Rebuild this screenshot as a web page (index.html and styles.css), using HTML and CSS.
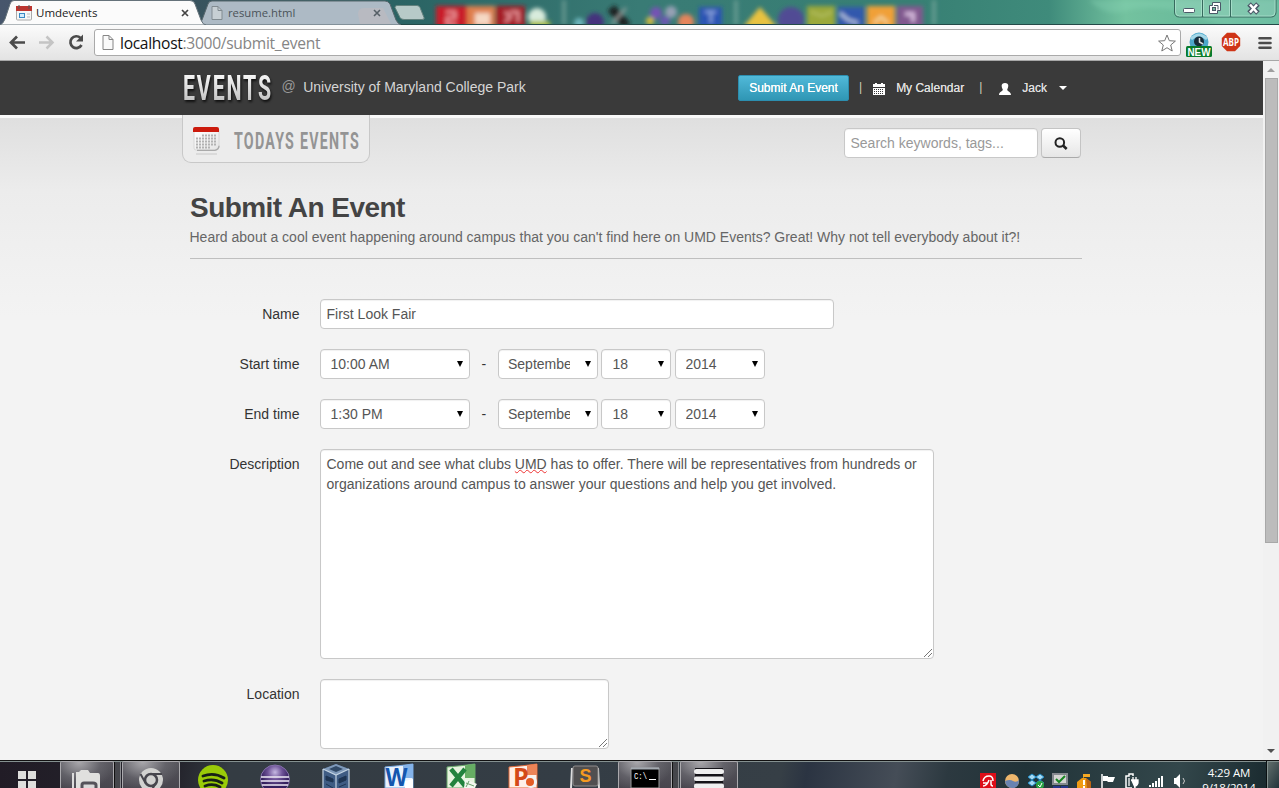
FILE: index.html
```html
<!DOCTYPE html>
<html lang="en">
<head>
<meta charset="utf-8">
<title>Umdevents</title>
<link rel="stylesheet" href="styles.css">
</head>
<body>
<div class="screen">
  <div class="tabstrip">
    <svg class="wallpaper" width="1279" height="25" viewBox="0 0 1279 25">
      <defs>
        <linearGradient id="sky"><stop offset="0" stop-color="#47566c"/><stop offset=".15" stop-color="#39535e"/><stop offset=".32" stop-color="#2b6464"/><stop offset=".5" stop-color="#397b75"/><stop offset=".72" stop-color="#388074"/><stop offset=".82" stop-color="#3f8b7b"/><stop offset=".88" stop-color="#73c29f"/><stop offset="1" stop-color="#5eb197"/></linearGradient>
        <filter id="soft" filterUnits="userSpaceOnUse" x="0" y="-10" width="1279" height="50"><feGaussianBlur stdDeviation="2.3"/></filter>
      </defs>
      <rect width="1279" height="25" fill="url(#sky)"/>
      <g filter="url(#soft)">
        <rect x="436" y="6" width="31" height="24" fill="#c91c2a"/><rect x="467" y="6" width="28" height="24" fill="#df804e"/><rect x="496" y="6" width="29" height="24" fill="#a51d27"/>
        <path d="M446 12h9v6h-8v6h9M505 12l6 5-6 5M510 12h8v10" stroke="#ed9ba0" stroke-width="2.500" fill="none"/>
        <rect x="475" y="13" width="15" height="12" fill="#f5d8c4"/>
        <circle cx="537" cy="17" r="9" fill="#d8ebdc"/><path d="M530 21h20v8h-20z" fill="#a8bd45"/>
        <circle cx="595" cy="22" r="9" fill="#45307d"/><circle cx="579" cy="23" r="5" fill="#6db6bd"/><path d="M611 8l16 18" stroke="#1c2224" stroke-width="9"/><path d="M612 24l14-16" stroke="#a3a7a5" stroke-width="2"/>
        <circle cx="656" cy="13" r="6" fill="#7553b4"/><circle cx="671" cy="12" r="6" fill="#96a0b4"/><circle cx="650" cy="21" r="4" fill="#d2bb3c"/><circle cx="665" cy="21" r="5" fill="#6b56b1"/><circle cx="686" cy="22" r="8" fill="#e5855c"/>
        <rect x="699" y="7" width="23" height="22" fill="#2954b4"/><path d="M705 12h11M711 12v11" stroke="#8ea7df" stroke-width="2.500"/>
        <path d="M743 27l17-20 17 20z" fill="#e8c240"/><circle cx="791" cy="20" r="13" fill="#514b94"/><rect x="807" y="6" width="28" height="23" fill="#9ba93b"/><path d="M811 12l11 4 10-4" stroke="#d1d98b" fill="none"/><rect x="838" y="7" width="26" height="22" fill="#3258ad"/><path d="M840 13l8 7 10 3" stroke="#b9c7df" stroke-width="3" fill="none"/><rect x="867" y="6" width="28" height="23" fill="#f0a038"/><path d="M874 23l7-6 7 6" stroke="#f2d39a" stroke-width="3" fill="none"/><rect x="897" y="6" width="26" height="23" fill="#81598f"/><path d="M905 14h8v8" stroke="#d4b8db" stroke-width="4" fill="none"/>
        <path d="M564 0v25M736 0v25M934 0v25" stroke="#90b5ac" stroke-width="4" opacity=".5"/>
        <path d="M1089 0q15 17 36 11t55 0l50 18h50V0z" fill="#90dab9" opacity=".3"/>
      </g>
      <path d="M0 24.500h1279" stroke="#244a48"/>
    </svg>
    <svg class="tabshapes" width="430" height="25" viewBox="0 0 430 25">
      <path d="M197 25Q200 25 202 20L208 4Q209 1 212 1H385Q388 1 390 4L396 20Q398 24 401 25z" fill="#adbac5" stroke="#57666c"/>
      <path d="M358 14q0-6 6-6h19l8 16h-31z" fill="#cfb9bb" opacity=".35"/>
      <path d="M395 7.500q0-2 2-2h20q2 0 3 2l4 10q1 2-2 2h-18q-3 0-4-2z" fill="#b7cac8" stroke="#62817d"/>
      <path d="M0 25Q3 24 5 19L10 4Q11 .5 14 .5H190Q194 .5 195 4L201 20Q203 25 206 25z" fill="#fbfbfb" stroke="#65727a"/>
    </svg>
    <div class="tab tab-active">
      <svg width="16" height="16" viewBox="0 0 16 16"><rect x=".5" y="2" width="15" height="13" rx="1" fill="#f6f6f6" stroke="#aaa"/><path d="M0 1h16v5H0z" fill="#bc3530"/><path d="M3 0v4M13 0v4" stroke="#555"/><rect x="3.500" y="8.500" width="5" height="4" fill="#d3eafa" stroke="#3989c4"/><path d="M11 9h3M11 12h3" stroke="#bbb"/></svg>
      <span class="tab-title">Umdevents</span>
      <svg class="tab-close" width="8" height="8" viewBox="0 0 8 8"><path d="M1 1l6 6M7 1L1 7" stroke="#444" stroke-width="1.700"/></svg>
    </div>
    <div class="tab tab-idle">
      <svg width="12" height="14" viewBox="0 0 12 14"><path d="M1 .5h6l4 4v9H1z" fill="#c7cfd4" stroke="#818b91"/><path d="M7 .5v4h4" fill="none" stroke="#818b91"/></svg>
      <span class="tab-title">resume.html</span>
      <svg class="tab-close" width="8" height="8" viewBox="0 0 8 8"><path d="M1 1l6 6M7 1L1 7" stroke="#555f66" stroke-width="1.600"/></svg>
    </div>
    <svg class="window-buttons" width="106" height="19" viewBox="0 0 106 19"><path d="M1.500 0v12q0 5 5 5H98q5 0 5-5V0M29.500 0v17M57.500 0v17" fill="#fff" fill-opacity=".12" stroke="#376a5e"/><path d="M2.500 0v12q0 4 4 4h22V0M30.500 0v16h26V0M58.500 0v16H98q4 0 4-4V0" fill="none" stroke="#b7e8d5" stroke-opacity=".65"/><rect x="10.500" y="8.500" width="11" height="4" rx="1" fill="#fff" stroke="#4b5968"/><path d="M39.500 2.500h8v8h-3v3h-8v-8h3z" fill="#fff" stroke="#4b5968"/><rect x="39.500" y="7.500" width="3" height="3" fill="#73b89e" stroke="#4b5968"/><path d="M41 5.500h4v4" fill="none" stroke="#4b5968"/><path d="M76 4l9 9M85 4l-9 9" stroke="#4b5968" stroke-width="5"/><path d="M77 4.500l7 8M84 4.500l-7 8" stroke="#fff" stroke-width="2.500"/></svg>
  </div>

  <div class="toolbar">
    <svg class="nav-icons" width="78" height="20" viewBox="0 0 78 20"><path d="M17 9.500H3M9 3.500l-6 6 6 6" fill="none" stroke="#4b4b4b" stroke-width="2.700"/><path d="M31 9.500h13M38.500 3.500l6 6-6 6" fill="none" stroke="#c4c4c4" stroke-width="2.500"/><path d="M72.500 5A5.900 5.900 0 1 0 73.500 12" fill="none" stroke="#4b4b4b" stroke-width="2.700"/><path d="M75 1.500v7h-7z" fill="#4b4b4b"/></svg>
    <div class="omnibox">
      <svg width="12" height="15" viewBox="0 0 12 15"><path d="M1 .5h6l4 4v10H1z" fill="#fafafa" stroke="#868686"/><path d="M7 .5v4h4" fill="none" stroke="#868686"/></svg>
      <span class="url"><span class="host">localhost</span>:3000/submit_event</span>
      <svg class="star" width="18" height="18" viewBox="0 0 18 18"><path d="M9 1l2.300 5.700 6.100.4-4.700 3.900 1.500 6L9 13.700 3.800 17l1.500-6L.6 7.100l6.100-.4z" fill="#fff" stroke="#777"/></svg>
    </div>
    <svg class="ext-new" width="28" height="26" viewBox="0 0 28 26"><circle cx="14" cy="10" r="9.500" fill="#4da8cc"/><path d="M6 7q8-8 16 0" fill="none" stroke="#a4d7e7" stroke-width="3"/><circle cx="14" cy="9.500" r="5" fill="#172c3a"/><path d="M14.500 6v4l3.500 2" stroke="#ddd" stroke-width="1.500" fill="none"/><rect x="1" y="14" width="26" height="11" rx="1.500" fill="#087b2b"/><text x="2.500" y="23.500" textLength="23" lengthAdjust="spacingAndGlyphs" class="badge-new">NEW</text></svg>
    <svg class="ext-abp" width="20" height="20" viewBox="0 0 20 20"><path d="M6 .8h8L19.200 6v8L14 19.200H6L.8 14V6z" fill="#cf3517"/><text x="2" y="13.500" textLength="16" lengthAdjust="spacingAndGlyphs" class="badge-abp">ABP</text></svg>
    <svg class="menu-icon" width="14" height="14" viewBox="0 0 14 14"><path d="M1.500 2.200h11M1.500 7h11M1.500 11.800h11" stroke="#4c4c4c" stroke-width="2.600" stroke-linecap="round"/></svg>
  </div>

  <div class="viewport">
    <div class="page">
      <div class="navbar">
        <svg class="brand" width="92" height="36" viewBox="0 0 92 36">
          <defs><linearGradient id="metal" x2="0" y2="1"><stop offset=".2" stop-color="#f5f5f5"/><stop offset=".8" stop-color="#c6c6c6"/></linearGradient></defs>
          <text x="1" y="28.500" textLength="90" lengthAdjust="spacingAndGlyphs" class="brand-text" fill="url(#metal)">EVENTS</text>
        </svg>
        <span class="at">@</span>
        <span class="school">University of Maryland College Park</span>
        <div class="usernav">
          <a class="btn-submit">Submit An Event</a>
          <span class="bar bar-one">|</span>
          <svg class="cal" width="12" height="12" viewBox="0 0 12 12" shape-rendering="crispEdges"><path d="M0 1h12v3H0zM2 0h2v1H2zM8 0h2v1H8zM0 5h12v7H0z" fill="#fff"/><path d="M1 6.500h10M1 8.500h10M1 10.500h10" stroke="#3a3a3a" stroke-dasharray="1 1"/></svg>
          <span class="my-cal">My Calendar</span>
          <span class="bar bar-two">|</span>
          <svg class="person" width="12" height="12" viewBox="0 0 12 12"><path d="M6 0c4.500 0 3.500 4 2.200 6.500 0 2 3.800 2 3.800 5.500H0C0 8.500 3.800 8.500 3.800 6.500 2.500 4 1.500 0 6 0z" fill="#fff"/></svg>
          <span class="user">Jack</span>
          <span class="caret"></span>
        </div>
      </div>
      <div class="subnav">
        <div class="today">
          <svg width="28" height="30" viewBox="0 0 28 30"><defs><linearGradient id="paper" x2="1" y2="1"><stop stop-color="#fff"/><stop offset="1" stop-color="#e4e4e4"/></linearGradient></defs><path d="M1 4h25v17q0 3-3 3H3q-2 0-2-2z" fill="url(#paper)" stroke="#d8d8d8"/><path d="M4 24.300h18q4-1 4-4.500" fill="none" stroke="#aaa" stroke-width="1.300"/><path d="M0 6V3q0-2 2-2h22q2 0 2 2v3z" fill="#cc1b0d"/><path d="M9 9.500h14M3 12.500h20M3 15.500h20M3 18.500h20M3 21.500h14" stroke="#b2b2b2" stroke-width="2" stroke-dasharray="2 1"/><path d="M3 28h21" stroke="#d5d5d5" stroke-width="1.500"/></svg>
          <svg class="today-label" width="128" height="26" viewBox="0 0 128 26"><text x="0" y="19.500" textLength="126" lengthAdjust="spacingAndGlyphs" class="today-text">TODAYS EVENTS</text></svg>
        </div>
        <div class="search">
          <div class="field search-field">Search keywords, tags...</div>
          <div class="search-btn"><svg width="14" height="14" viewBox="0 0 14 14"><circle cx="5.800" cy="5.500" r="4.300" fill="none" stroke="#222" stroke-width="2"/><path d="M9 8.500l3.700 3.500" stroke="#222" stroke-width="2.600"/></svg></div>
        </div>
      </div>
      <div class="heading">
        <h1>Submit An Event</h1>
        <p>Heard about a cool event happening around campus that you can't find here on UMD Events? Great! Why not tell everybody about it?!</p>
      </div>
      <form class="form">
        <div class="row"><label>Name</label><div class="field name">First Look Fair</div></div>
        <div class="row"><label>Start time</label><div class="field pick time"><span>10:00 AM</span><i></i></div><span class="dash">-</span><div class="field pick month"><span>September</span><i></i></div><div class="field pick day"><span>18</span><i></i></div><div class="field pick year"><span>2014</span><i></i></div></div>
        <div class="row"><label>End time</label><div class="field pick time"><span>1:30 PM</span><i></i></div><span class="dash">-</span><div class="field pick month"><span>September</span><i></i></div><div class="field pick day"><span>18</span><i></i></div><div class="field pick year"><span>2014</span><i></i></div></div>
        <div class="row"><label>Description</label><div class="field area description">Come out and see what clubs <u>UMD</u> has to offer. There will be representatives from hundreds or organizations around campus to answer your questions and help you get involved.<svg class="grip" width="8" height="8" viewBox="0 0 8 8"><path d="M0 8L8 0M4 8l4-4" stroke="#777"/></svg></div></div>
        <div class="row"><label>Location</label><div class="field area location"><svg class="grip" width="8" height="8" viewBox="0 0 8 8"><path d="M0 8L8 0M4 8l4-4" stroke="#777"/></svg></div></div>
      </form>
    </div>
    <div class="scrollbar"><span class="arrow-up"></span><div class="thumb"></div><span class="arrow-down"></span></div>
  </div>

  <div class="taskbar">
    <div class="start"><svg width="20" height="20" viewBox="0 0 20 20"><path d="M1 1h8v8H1zM11 1h8v8h-8zM1 11h8v9H1zM11 11h8v9h-8z" fill="#dededc"/></svg></div>
    <div class="apps">
      <div class="app open stacked"><svg width="32" height="26" viewBox="0 0 32 26"><path d="M2 11v15" stroke="#ddd" stroke-width="2"/><path d="M5 26V10h3l2-2h7l2 3h8q2 0 2 3v12z" fill="#e0e0de"/><path d="M11 26v-3q0-2 2-2h9q3 0 3 2v3" fill="#d9d9d9" stroke="#55535a" stroke-width="3"/></svg></div>
      <div class="app open"><svg width="32" height="26" viewBox="0 0 32 26"><circle cx="16" cy="18" r="12" fill="#d2d2d0"/><circle cx="16" cy="18" r="6" fill="#d2d2d0" stroke="#47464d" stroke-width="2.500"/><path d="M16 12h11M10.500 21L5.500 12M21 21l-5 8" stroke="#47464d" stroke-width="2"/></svg></div>
      <div class="app"><svg width="32" height="26" viewBox="0 0 32 26"><circle cx="16" cy="18" r="15" fill="#9acb08"/><path d="M6 14q11-4 21 2M7 19q10-3 18 2M8 24q8-3 15 1" fill="none" stroke="#172016" stroke-width="2.800" stroke-linecap="round"/></svg></div>
      <div class="app"><svg width="32" height="26" viewBox="0 0 32 26"><defs><radialGradient id="orb" cx=".5" cy=".25"><stop stop-color="#c6b9e3"/><stop offset=".5" stop-color="#6e5297"/><stop offset="1" stop-color="#34205e"/></radialGradient></defs><circle cx="16" cy="17.500" r="14.500" fill="url(#orb)" stroke="#8572aa"/><path d="M2 15h28M2 19h28M3 23h26" stroke="#eeeaf5" stroke-width="1.700"/></svg></div>
      <div class="app"><svg width="32" height="26" viewBox="0 0 32 26"><path d="M2 7L15 2l13 5v21l-13 5-13-5z" fill="#3f5c84"/><path d="M2 7L15 2l13 5-13 6z" fill="#7f99b9"/><path d="M15 13v18M2 7l13 6 13-6M2 7v20M28 7v20" fill="none" stroke="#c3d3e3" stroke-width="1.200"/><path d="M8 7l7-3 7 3-7 3z" fill="#314967"/><path d="M5 14l7 3v3l-7-2zM18 17l7-3v4l-7 3zM5 22l7 4M18 25l7-3" fill="#1f3553" stroke="#1f3553"/></svg></div>
      <div class="app"><svg width="32" height="26" viewBox="0 0 32 26"><path d="M2 5q13-1 28-3v24H2z" fill="#eaf2fd" stroke="#77a8df"/><path d="M20 3.500l10-1.500v14H20z" fill="#83b2e9"/><text x="2.500" y="24" textLength="22" lengthAdjust="spacingAndGlyphs" class="letter word">W</text><path d="M22 19l8-2v9h-8z" fill="#fff"/></svg></div>
      <div class="app"><svg width="32" height="26" viewBox="0 0 32 26"><path d="M2 5q13-1 28-3v24H2z" fill="#e7f3df" stroke="#69a86b"/><path d="M20 3.500L30 2v14H20z" fill="#66ad63"/><path d="M6 7l14 17M20 7L6 24" stroke="#22823d" stroke-width="4.500"/><path d="M20 17l12 5-3 5H19z" fill="#f3f8ef"/><path d="M21 21l8 3M24 19l-3 6" stroke="#6aa06b"/></svg></div>
      <div class="app"><svg width="32" height="26" viewBox="0 0 32 26"><path d="M2 5q13-1 28-3v24H2z" fill="#fff0e8" stroke="#e16939"/><path d="M20 3.500L30 2v11H20z" fill="#ed8457"/><text x="6" y="24" class="letter point">P</text><circle cx="24" cy="20" r="6" fill="#f3f3f3"/><circle cx="23" cy="20" r="4" fill="#e45c25"/></svg></div>
      <div class="app"><svg width="32" height="26" viewBox="0 0 32 26"><path d="M3 6l-1 20M29 6l1 20" stroke="#ddd" stroke-width="2"/><rect x="4" y="4" width="25" height="20" rx="2" fill="#504f50" stroke="#8f8d8d"/><text x="10.500" y="20" class="letter sub">S</text></svg></div>
      <div class="app open stacked"><svg width="32" height="26" viewBox="0 0 32 26"><path d="M2 6h28v20H2z" fill="#000" stroke="#999"/><path d="M2 6.500h28" stroke="#a3a9b0" stroke-width="2"/><text x="5" y="17" textLength="13" lengthAdjust="spacingAndGlyphs" class="prompt">C:\</text><path d="M20 17.500h7" stroke="#fff"/></svg></div>
      <div class="app open"><svg width="32" height="26" viewBox="0 0 32 26"><rect x="2" y="6" width="28" height="19" fill="#141318"/><rect x="1" y="7" width="30" height="5" rx="2.500" fill="#efefef"/><rect x="1" y="14.500" width="30" height="4.500" rx="2" fill="#efefef"/><rect x="1" y="21.500" width="30" height="5" rx="2" fill="#efefef"/></svg></div>
    </div>
    <div class="tray">
      <svg width="16" height="16" viewBox="0 0 16 16"><path d="M0 0h16v16H0z" fill="#dd0e19"/><path d="M3 8q1-5 6-5 4 0 4 5M3 13q4 0 6-6M3 10h5M11 7v4q0 2 2 2" fill="none" stroke="#fff" stroke-width="1.500"/></svg>
      <svg width="16" height="16" viewBox="0 0 16 16"><circle cx="8" cy="8" r="7" fill="#edb66c"/><path d="M1 8q5-2 8 0t6-1q0 8-7 8-6 0-7-7z" fill="#6983b1"/></svg>
      <svg width="16" height="16" viewBox="0 0 16 16"><path d="M4 1l4 3-4 3-4-3zM12 1l4 3-4 3-4-3zM4 7l4 3-4 3-4-3zM12 7l4 3-4 3-4-3z" fill="#a5daf3" stroke="#208bc7"/><circle cx="12" cy="12" r="4" fill="#29a143"/><path d="M10 12l2 2 2-4" stroke="#fff" fill="none"/></svg>
      <svg width="16" height="16" viewBox="0 0 16 16"><path d="M1 1h14v10H1z" fill="#d4d5d2" stroke="#85898f" stroke-width="2"/><path d="M4 6l3 3 6-6" fill="none" stroke="#178621" stroke-width="2"/><path d="M1 14h6v2M9 14h6v2" fill="#ddd" stroke="#27368b" stroke-width="2"/></svg>
      <svg width="16" height="16" viewBox="0 0 16 16"><path d="M1 16V9l5-4h4l5 4v7z" fill="#f09b12"/><path d="M10 5l5 4v7h-4z" fill="#bc6513"/><path d="M7 6V1h7v3H8" fill="#f5a924"/><path d="M8 7v5M8 13v2" stroke="#fff" stroke-width="2"/></svg>
      <svg width="16" height="16" viewBox="0 0 16 16"><path d="M2 1v15" stroke="#fff" stroke-width="1.500"/><path d="M3 3h5v1h7l-2 5H8L7 8H3z" fill="#fff"/></svg>
      <svg width="16" height="16" viewBox="0 0 16 16"><path d="M9 3V1H5v2H2v12h6" fill="none" stroke="#fff" stroke-width="1.500"/><path d="M7 7h7v3q-1 3-3 3v3M9 4v3M12 4v3M5 5v8" fill="#fff" stroke="#fff" stroke-width="1.300"/></svg>
      <svg width="16" height="16" viewBox="0 0 16 16"><path d="M2 12v2M5 10v4M8 8v6M11 5v9M14 3v11" stroke="#fff" stroke-width="2"/></svg>
      <svg width="16" height="16" viewBox="0 0 16 16"><path d="M2 5h2l4-4v14l-4-4H2z" fill="#fff"/><path d="M11 5q3 3 0 6" stroke="#ccc" fill="none"/></svg>
    </div>
    <div class="clock"><span>4:29 AM</span><span>9/18/2014</span></div>
    <div class="peek"></div>
  </div>
</div>
</body>
</html>
```
FILE: styles.css
```css
* { box-sizing: border-box; }
body { margin: 0; overflow: hidden; font: 14px/20px "Liberation Sans", Arial, sans-serif; color: #333; }
svg { display: block; flex: none; }
.screen { width: 1279px; height: 788px; display: flex; flex-direction: column; overflow: hidden; }

.tabstrip { position: relative; flex: none; height: 25px; display: flex; }
.wallpaper, .tabshapes { position: absolute; left: 0; top: 0; }
.tab { position: relative; display: flex; align-items: center; height: 25px; font: 12px/16px "Open Sans", sans-serif; color: #222; }
.tab-active { width: 200px; padding-left: 16px; }
.tab-idle { width: 195px; padding-left: 11px; color: #4b5359; }
.tab-title { margin-left: 4px; font-size: 11.500px; }
.tab-idle .tab-title { margin-left: 5px; font-size: 11.300px; }
.tab-close { margin-left: auto; margin-right: 11px; }
.tab-idle .tab-close { margin-right: 14px; }
.window-buttons { position: relative; margin-left: auto; }

.toolbar { flex: none; height: 36px; display: flex; background: linear-gradient(#fbfbfb, #e3e3e3); border-bottom: 1px solid #a7a7a7; }
.nav-icons { margin: 8px 0 0 8px; }
.omnibox { width: 1087px; height: 27px; margin: 4px 0 0 8px; padding: 0 4px 0 7px; display: flex; align-items: center; background: #fff; border: 1px solid #aaa; border-radius: 3px; }
.url { margin-left: 6px; font: 15.600px/22px "Open Sans", sans-serif; color: #858585; letter-spacing: -.31px; }
.host { color: #111; }
.star { margin-left: auto; }
.ext-new { margin: 7px 0 0 4px; overflow: visible; }
.ext-abp { margin: 7px 0 0 8px; overflow: visible; }
.badge-new { font: bold 11.500px "Liberation Sans", sans-serif; fill: #fff; }
.badge-abp { font: bold 10px "Open Sans", sans-serif; fill: #fff; }
.menu-icon { margin: 11px 0 0 17px; }

.viewport { flex: none; height: 699px; display: flex; overflow: hidden; }
.page { width: 1263px; height: 699px; background: linear-gradient(#dfdfdf 57px, #ececec 130px, #f3f3f3 255px); }
.navbar { height: 57px; display: flex; align-items: flex-start; padding-left: 182px; background: #3a3a3a; border-bottom: 3px solid #f8f8f8; }
.brand { margin-top: 10px; overflow: visible; }
.brand-text { font: bold 34.500px Roboto, sans-serif; letter-spacing: 3px; filter: drop-shadow(1px 2px 1px #111); }
.at { margin: 15px 0 0 7.500px; color: #999; }
.school { margin: 16px 0 0 7.500px; color: #d5d5d5; }
.usernav { margin-left: auto; width: 525px; display: flex; font-size: 12px; color: #dedede; line-height: 20px; padding-top: 14px; }
.btn-submit { width: 111px; height: 26px; line-height: 25px; text-align: center; color: #fff; border-radius: 2px; background: linear-gradient(#51b9d9, #2f96b4); border: 1px solid #2c8eaf; text-shadow: 0 0 .5px #fff; }
.bar { margin: 2px 0 0 10px; color: #d0d0b8; }
.cal { margin: 8px 0 0 11px; }
.my-cal, .user { margin: 3px 0 0 11px; text-shadow: 0 0 .4px #ddd; }
.bar-two { margin-left: 15px; }
.person { margin: 8px 0 0 17px; }
.caret { margin: 11px 0 0 12px; width: 8px; height: 4px; border: 4px solid transparent; border-top-color: #fff; border-bottom: 0; }

.subnav { height: 47px; display: flex; justify-content: space-between; padding: 0 182px; }
.today { position: relative; width: 188px; height: 48px; margin-top: -3px; display: flex; padding: 11px 0 0 10px; gap: 13px; background: #ececec; border: 1px solid #c8c8c8; border-top: 0; border-radius: 0 0 9px 9px; }
.today-label { margin-top: 3px; overflow: visible; }
.today-text { font: bold 23px Roboto, sans-serif; letter-spacing: 2px; fill: #949494; }
.search { display: flex; gap: 3px; padding-top: 10px; }
.field { height: 30px; padding: 4px 5.500px; background: #fff; border: 1px solid #c8c8c8; border-radius: 4px; color: #555; box-shadow: inset 0 1px 1px rgba(0,0,0,.06); }
.search-field { width: 194px; color: #999; }
.search-btn { width: 40px; height: 30px; display: flex; justify-content: center; padding-top: 8px; background: linear-gradient(#fff, #e6e6e6); border: 1px solid #c4c4c4; border-bottom-color: #aaa; border-radius: 4px; }
.heading { width: 892px; height: 94px; margin-left: 190px; padding-top: 24px; border-bottom: 1px solid #bfbfbf; }
h1 { margin: 0; font-size: 28px; line-height: 38px; letter-spacing: -.54px; color: #444; }
p { margin: 0 0 0 -.5px; color: #666; white-space: nowrap; }
.form { padding-top: 40px; }
.row { display: flex; align-items: flex-start; margin-bottom: 20px; }
label { width: 299.500px; text-align: right; padding-top: 5px; margin-right: 20.500px; }
.name { width: 514px; }
.pick { display: flex; align-items: center; justify-content: space-between; padding: 0 6px 0 9.500px; margin-right: 4px; }
.pick span { overflow: hidden; }
.pick i { border: 3.500px solid transparent; border-top: 6px solid #000; border-bottom: 0; }
.time { width: 150px; margin-right: 0; }
.dash { width: 28px; padding: 5px 0 0 11.500px; }
.month { width: 100px; margin-right: 3px; padding-left: 9px; }
.month span { width: 62px; }
.day { width: 70px; padding-left: 10.500px; }
.year { width: 90px; }
.area { position: relative; }
.description { width: 614px; height: 210px; }
.description u { text-decoration: underline wavy #e33 1px; text-underline-offset: 0; text-decoration-skip-ink: none; }
.location { width: 289px; height: 70px; }
.grip { position: absolute; right: 1px; bottom: 1px; }

.scrollbar { width: 16px; display: flex; flex-direction: column; align-items: center; background: #f1f1f1; }
.arrow-up { margin-top: 7px; border: 4px solid transparent; border-bottom: 4px solid #9e9e9e; border-top: 0; }
.thumb { width: 13px; height: 465px; margin-top: 6px; background: #bcbcbc; border: 1px solid #a8a8a8; }
.arrow-down { margin-top: auto; margin-bottom: 7px; border: 4px solid transparent; border-top: 4px solid #505050; border-bottom: 0; }

.taskbar { flex: none; height: 28px; display: flex; overflow: hidden; border-top: 1px solid #111; box-shadow: inset 0 1px #84908f; background: linear-gradient(100deg, #211c26, #24242c 14%, #343c43 18%, #343d45 45%, #363f46 61%, #2b3442 63%, #454d57 70%, #2c3940 74%, #213338 80%, #33474b 92%, #17272c); }
.start { width: 60px; padding: 9px 0 0 17px; }
.apps { display: flex; gap: 4px; }
.app { position: relative; width: 58px; height: 28px; display: flex; justify-content: center; padding-top: 1px; }
.letter { font: bold 25px "Open Sans", sans-serif; }
.word { fill: #1455ae; }
.point { fill: #d44a19; }
.sub { font: bold 18px "Liberation Sans", sans-serif; fill: #f59a20; }
.prompt { font: 9px "Liberation Mono", monospace; fill: #fff; }
.open { border: 1px solid #aaa9ad; border-bottom: 0; padding-top: 0; border-radius: 2px 2px 0 0; background: radial-gradient(ellipse at 35% 0, #a9a8ac, rgba(110,109,116,.6) 45%, transparent 75%), linear-gradient(#55545b, #47454d); }
.stacked { width: 54px; margin-right: 4px; }
.stacked::after { content: ""; position: absolute; left: 53px; top: 0; width: 5px; height: 28px; border-left: 1px solid #111; border-right: 1px solid #8b8c90; background: #45464b; }
.tray { display: flex; gap: 8px; margin-left: auto; margin-right: 15px; padding-top: 12px; }
.clock { width: 52px; display: flex; flex-direction: column; align-items: center; padding-top: 4px; font: 11.500px/15px "Open Sans", sans-serif; color: #fff; letter-spacing: -.1px; margin-right: 11px; }
.peek { width: 13px; border-left: 1px solid #0a1012; box-shadow: inset 1px 1px #83918f; background: linear-gradient(120deg, #65716f, #22343a); }
```
